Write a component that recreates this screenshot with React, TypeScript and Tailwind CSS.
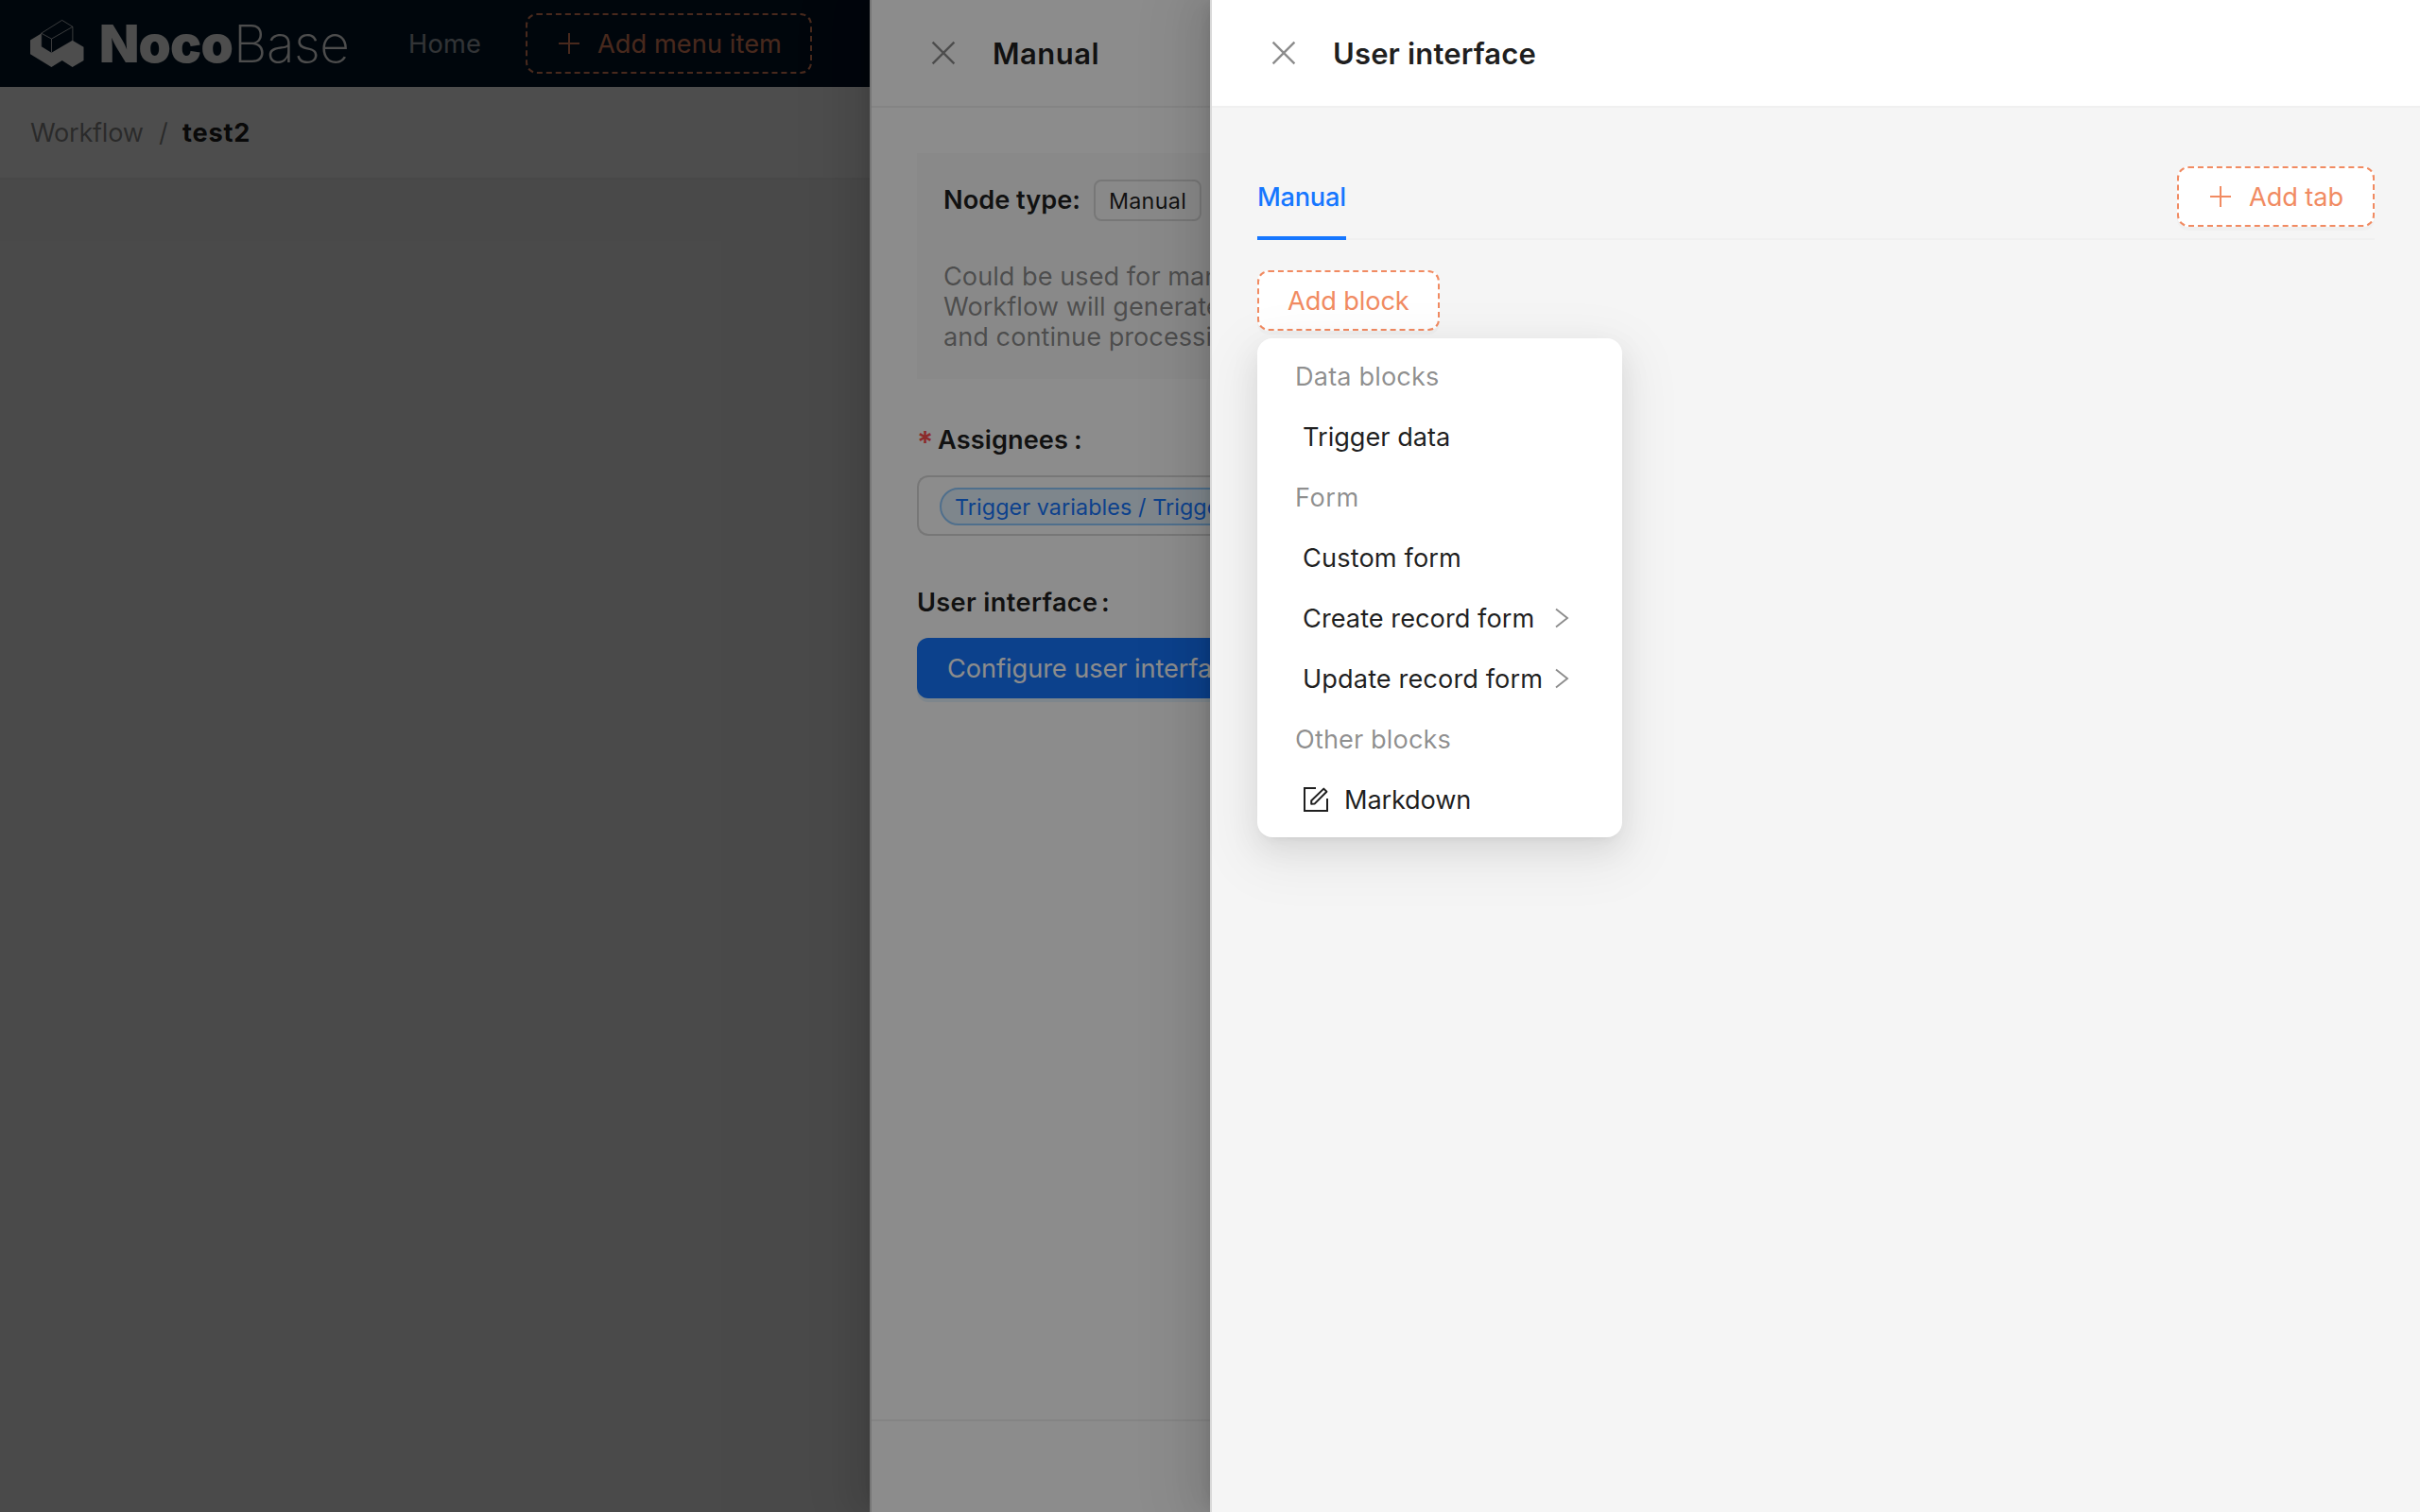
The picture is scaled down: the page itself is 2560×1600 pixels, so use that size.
import React from "react";

const drawerShadow =
  "shadow-[-12px_0_32px_0_rgba(0,0,0,0.08),-6px_0_12px_-8px_rgba(0,0,0,0.12),-18px_0_56px_16px_rgba(0,0,0,0.05)]";
const menuShadow =
  "shadow-[0_12px_32px_0_rgba(0,0,0,0.08),0_6px_12px_-8px_rgba(0,0,0,0.12),0_18px_56px_16px_rgba(0,0,0,0.05)]";

function CloseIcon() {
  return (
    <svg className="h-8 w-8 shrink-0 text-black/45" viewBox="0 0 32 32" fill="none" stroke="currentColor" strokeWidth="2.4">
      <path d="M4.6 4.6 27.4 27.4M27.4 4.6 4.6 27.4" />
    </svg>
  );
}

function PlusIcon() {
  return (
    <svg className="h-7 w-7 shrink-0" viewBox="0 0 28 28" fill="none" stroke="currentColor" strokeWidth="2">
      <path d="M14 3v22M3 14h22" />
    </svg>
  );
}

function EditIcon() {
  return (
    <svg className="h-7 w-7 shrink-0" viewBox="0 0 28 28" fill="none" stroke="currentColor" strokeWidth="2">
      <path d="M14 2H2v24h24V13" />
      <path d="M9.2 18.8V15.3L22.3 2.6l3.1 3.1L12.6 18.6z" strokeLinejoin="round" />
    </svg>
  );
}

function ChevronIcon() {
  return (
    <svg className="h-6 w-4 shrink-0 text-black/45" viewBox="0 0 16 24" fill="none" stroke="currentColor" strokeWidth="1.9">
      <path d="M2 2.6 14 12 2 21.4" />
    </svg>
  );
}

function Logo() {
  return (
    <div className="flex items-center text-white">
      <svg className="h-[52px] w-[57px] shrink-0" viewBox="0 0 57 52">
        <path
          fill="currentColor"
          d="M11.5 15.5 0 22.5v14.8L22.4 51l11.3-7L44.6 51l11.9-7V29.7l-11.9-7L22.4 35.8 11.5 29z"
        />
        <path
          fill="none"
          stroke="currentColor"
          strokeOpacity="0.75"
          strokeWidth="1"
          d="M11.7 15.2 33.6 1.4 44.9 8.3v14.9M11.7 15.2l10.8 5.9L44.9 8.3M22.5 21.1v14.5M11.7 15.2v14"
        />
      </svg>
      <span className="ml-4 w-[142px] text-[55px] font-black leading-none tracking-[-0.8px]">Noco</span>
      <span className="w-[122px] text-[55px] font-extralight leading-none tracking-[-0.5px]">Base</span>
    </div>
  );
}

function WorkflowPage() {
  return (
    <div className="flex h-full flex-col bg-[#f5f5f5]">
      <header className="flex h-[92px] items-center bg-[#001529] pl-8">
        <Logo />
        <span className="ml-[63px] w-[124px] pt-px tracking-[0.2px] text-white/65">Home</span>
        <div className="flex h-16 w-[303px] items-center rounded-xl border-2 border-dashed border-[#f18b62] pl-[30px] text-[#f18b62]">
          <PlusIcon />
          <span className="ml-4 pt-px tracking-[0.07px]">Add menu item</span>
        </div>
      </header>
      <div className="flex h-[98px] items-center border-b-2 border-[#f0f0f0] bg-white pl-8 pt-px">
        <span className="w-[120px] tracking-[-0.3px] text-black/45">Workflow</span>
        <span className="ml-4 w-[25px] text-black/45">/</span>
        <span className="font-bold tracking-[0.8px] text-black/90">test2</span>
      </div>
    </div>
  );
}

function DrawerHeader({ title, className }: { title: string; className: string }) {
  return (
    <div className="flex h-[114px] shrink-0 items-center border-b-2 border-[#f0f0f0] bg-white pl-[60px]">
      <CloseIcon />
      <span className={`ml-9 pt-px text-[31px] font-semibold ${className}`}>{title}</span>
    </div>
  );
}

function NodeDrawer() {
  return (
    <div className={`flex h-full flex-col border-l-2 border-[#d9d9d9] bg-white ${drawerShadow}`}>
      <DrawerHeader title="Manual" className="tracking-[0.47px]" />
      <div className="flex flex-1 flex-col pl-12 pt-12">
        <div className="h-[239px] bg-[#fafafa] pl-7 pt-7">
          <div className="flex h-11 items-center">
            <span className="w-[159px] font-semibold">Node type:</span>
            <span className="flex h-11 w-[114px] items-center justify-center rounded-lg border-2 border-[#d9d9d9] pt-px text-[23.3px] tracking-[0.3px]">
              Manual
            </span>
          </div>
          <div className="mt-[43px] text-black/45">
            <div>Could be used for manual</div>
            <div>Workflow will generate</div>
            <div>and continue processing</div>
          </div>
        </div>
        <div className="mt-[42px] flex h-11 items-center pt-px font-semibold">
          <span className="w-[22px] pt-1.5 text-[32px] text-[#ff4d4f]">*</span>
          <span className="w-[144px] tracking-[0.08px]">Assignees</span>
          <span>:</span>
        </div>
        <div className="mt-4 flex h-16 items-center rounded-l-xl border-2 border-r-0 border-[#d9d9d9] pl-[22px] pt-0.5">
          <div className="flex h-10 items-center rounded-[20px] border-2 border-[#91caff] bg-[#e6f4ff] px-[14px] pt-px text-[23.3px] tracking-[0.1px] text-[#1677ff]">
            Trigger variables / Trigger data
          </div>
        </div>
        <div className="mt-12 flex h-11 items-center pt-px font-semibold">
          <span className="w-[195px] tracking-[0.34px]">User interface</span>
          <span>:</span>
        </div>
        <div className="mt-4 flex h-16 w-[360px] items-center rounded-xl bg-[#1677ff] pl-8 pt-px tracking-[-0.07px] text-white shadow-[0_4px_0_rgba(5,145,255,0.1)]">
          Configure user interface
        </div>
      </div>
      <div className="h-[98px] border-t-2 border-[#f0f0f0]" />
    </div>
  );
}

type MenuRow = { label: string; kind: "group" | "item" | "sub" | "icon"; tracking: string };

const rows: MenuRow[] = [
  { label: "Data blocks", kind: "group", tracking: "tracking-[0.12px]" },
  { label: "Trigger data", kind: "item", tracking: "tracking-[-0.02px]" },
  { label: "Form", kind: "group", tracking: "tracking-[0.5px]" },
  { label: "Custom form", kind: "item", tracking: "tracking-[0.12px]" },
  { label: "Create record form", kind: "sub", tracking: "tracking-[0.03px]" },
  { label: "Update record form", kind: "sub", tracking: "tracking-[0.09px]" },
  { label: "Other blocks", kind: "group", tracking: "tracking-[0.1px]" },
  { label: "Markdown", kind: "icon", tracking: "tracking-[-0.17px]" },
];

function BlockMenu() {
  return (
    <div className={`absolute left-0 top-[72px] z-10 w-[386px] rounded-2xl bg-white py-2 ${menuShadow}`}>
      {rows.map((row) =>
        row.kind === "group" ? (
          <div key={row.label} className={`flex h-16 items-center pl-10 pt-px text-black/45 ${row.tracking}`}>
            {row.label}
          </div>
        ) : (
          <div key={row.label} className="flex h-16 items-center pl-12 pr-14">
            {row.kind === "icon" && (
              <span className="mr-4 flex">
                <EditIcon />
              </span>
            )}
            <span className={`flex-1 pt-px ${row.tracking}`}>{row.label}</span>
            {row.kind === "sub" && <ChevronIcon />}
          </div>
        ),
      )}
    </div>
  );
}

function InterfaceDrawer() {
  return (
    <div className={`flex h-full flex-col border-l-2 border-[#d9d9d9] bg-[#f5f5f5] ${drawerShadow}`}>
      <DrawerHeader title="User interface" className="tracking-[0.15px]" />
      <div className="flex flex-col pl-12 pr-12 pt-12">
        <div className="flex h-[92px] justify-between border-b-2 border-[#f0f0f0]">
          <div className="-mb-0.5 flex w-[94px] items-center border-b-4 border-[#1677ff] pt-[5px] font-medium tracking-[-0.25px] text-[#1677ff]">
            Manual
          </div>
          <div className="mt-[14px] flex h-16 w-[209px] items-center rounded-xl border-2 border-dashed border-[#f18b62] bg-white pl-[30px] text-[#f18b62] shadow-[0_4px_0_rgba(0,0,0,0.02)]">
            <PlusIcon />
            <span className="ml-4 pt-px tracking-[-0.1px]">Add tab</span>
          </div>
        </div>
        <div className="relative mt-8 flex">
          <div className="flex h-16 w-[193px] items-center rounded-xl border-2 border-dashed border-[#f18b62] bg-white pl-[30px] pt-px tracking-[-0.12px] text-[#f18b62] shadow-[0_4px_0_rgba(0,0,0,0.02)]">
            Add block
          </div>
          <BlockMenu />
        </div>
      </div>
    </div>
  );
}

export default function App() {
  return (
    <div className="relative h-[1600px] w-[2560px] overflow-hidden whitespace-nowrap font-['Inter',sans-serif] text-[27.2px] leading-8 text-black/88">
      <WorkflowPage />
      <div className="absolute inset-0 bg-black/45" />
      <div className="absolute inset-y-0 left-[920px] w-[1640px]">
        <NodeDrawer />
      </div>
      <div className="absolute inset-0 bg-black/45" />
      <div className="absolute inset-y-0 left-[1280px] w-[1280px]">
        <InterfaceDrawer />
      </div>
    </div>
  );
}
